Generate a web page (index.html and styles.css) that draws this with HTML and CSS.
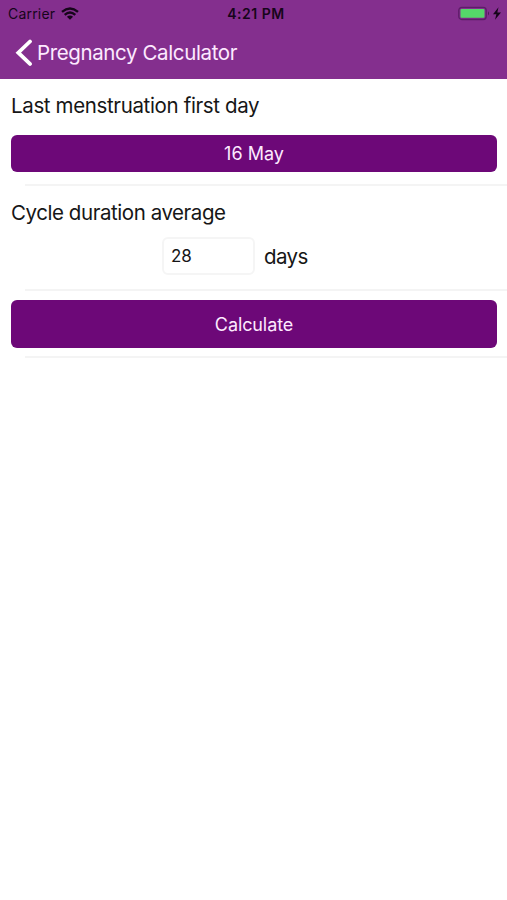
FILE: index.html
```html
<!DOCTYPE html>
<html lang="en">
<head>
<meta charset="utf-8">
<title>Pregnancy Calculator</title>
<link rel="stylesheet" href="styles.css">
</head>
<body>
<header class="header">
  <div class="status">
    <div class="carrier"><span>Carrier</span>
      <svg class="wifi" width="18" height="13" viewBox="0 0 18 13" fill="none" stroke="#16051a" stroke-width="2.4"><path d="M1 4.8Q9-2 17 4.8M3.7 7.8Q9 3.2 14.3 7.8"/><path d="M5.9 9.7Q9 7.2 12.1 9.7L9 12.8Z" fill="#16051a" stroke="none"/></svg>
    </div>
    <time class="time">4:21 PM</time>
    <div class="power">
      <svg width="44" height="15" viewBox="0 0 44 15"><rect x=".8" y="1.3" width="27.4" height="12.2" rx="3" fill="none" stroke="#5d1d68" stroke-width="1.3"/><rect x="2.5" y="3" width="24" height="8.8" rx="1" fill="#55d769"/><path d="M30 5.3Q32 7.4 30 9.5Z" fill="#4d1857"/><path d="M40.5 1.2 35 8.2h3.4l-1.4 5.6 6-7.4h-3.7Z" fill="#16051a"/></svg>
    </div>
  </div>
  <nav class="nav">
    <svg width="18" height="28" viewBox="0 0 18 28" fill="none" stroke="#fff" stroke-width="3.8" stroke-linecap="round"><path d="M15 2.5 3.3 13.7 15 24.9"/></svg>
    <h1 class="title">Pregnancy Calculator</h1>
  </nav>
</header>
<main>
  <section class="row date-row">
    <div class="label first">Last menstruation first day</div>
    <button class="button date">16 May</button>
  </section>
  <section class="row cycle-row">
    <label class="label second" for="cycle">Cycle duration average</label>
    <div class="cycle"><input id="cycle" class="input" value="28"><span class="days">days</span></div>
  </section>
  <section class="row action-row">
    <button class="button calculate">Calculate</button>
  </section>
</main>
</body>
</html>
```
FILE: styles.css
```css
* { box-sizing: border-box; }
body { margin: 0; min-height: 900px; background: #fff; color: #161616; font-family: Inter, "Liberation Sans", sans-serif; }
.header { height: 79px; background: #842f8e; }
.status { display: grid; grid-template-columns: 1fr auto 1fr; height: 27px; align-items: center; padding: 0 5px 0 8px; font-size: 14px; line-height: 27px; color: #16051a; }
.carrier { display: flex; align-items: center; gap: 6px; letter-spacing: .2px; }
.time { font-weight: 600; padding-left: 2px; letter-spacing: .5px; }
.power { display: flex; justify-content: flex-end; }
.nav { display: flex; align-items: center; height: 52px; padding-left: 15px; gap: 4px; }
.title { margin: 0; color: #fdeaff; font-size: 20.5px; font-weight: 400; line-height: 50px; letter-spacing: -.38px; }
.row { padding: 0 10px 0 11px; background: linear-gradient(#f4f4f4, #f4f4f4) 25px 100% / 100% 2px no-repeat; }
.date-row { height: 107px; padding-top: 14px; }
.cycle-row { height: 105px; padding-top: 13px; }
.action-row { height: 67px; padding-top: 9px; }
.label { display: block; height: 26px; font-size: 20.5px; line-height: 26px; letter-spacing: -.36px; }
.second { line-height: 28px; letter-spacing: -.44px; }
.button { display: block; width: 100%; border: 0; border-radius: 6px; padding: 0; background: #6d0878; color: #fdeaff; font: 18px Inter, "Liberation Sans", sans-serif; }
.date { height: 37px; margin-top: 16px; }
.calculate { height: 48px; letter-spacing: -.1px; }
.cycle { display: flex; align-items: center; gap: 10px; margin: 12px 0 0 151px; }
.input { width: 93px; height: 38px; border: 2px solid #f5f5f5; border-radius: 6px; padding: 0 7px; background: #fff; color: #161616; font: 17px Inter, "Liberation Sans", sans-serif; }
.days { margin-left: -1px; padding-top: 2px; font-size: 20.5px; line-height: 36px; letter-spacing: -.6px; }
```
